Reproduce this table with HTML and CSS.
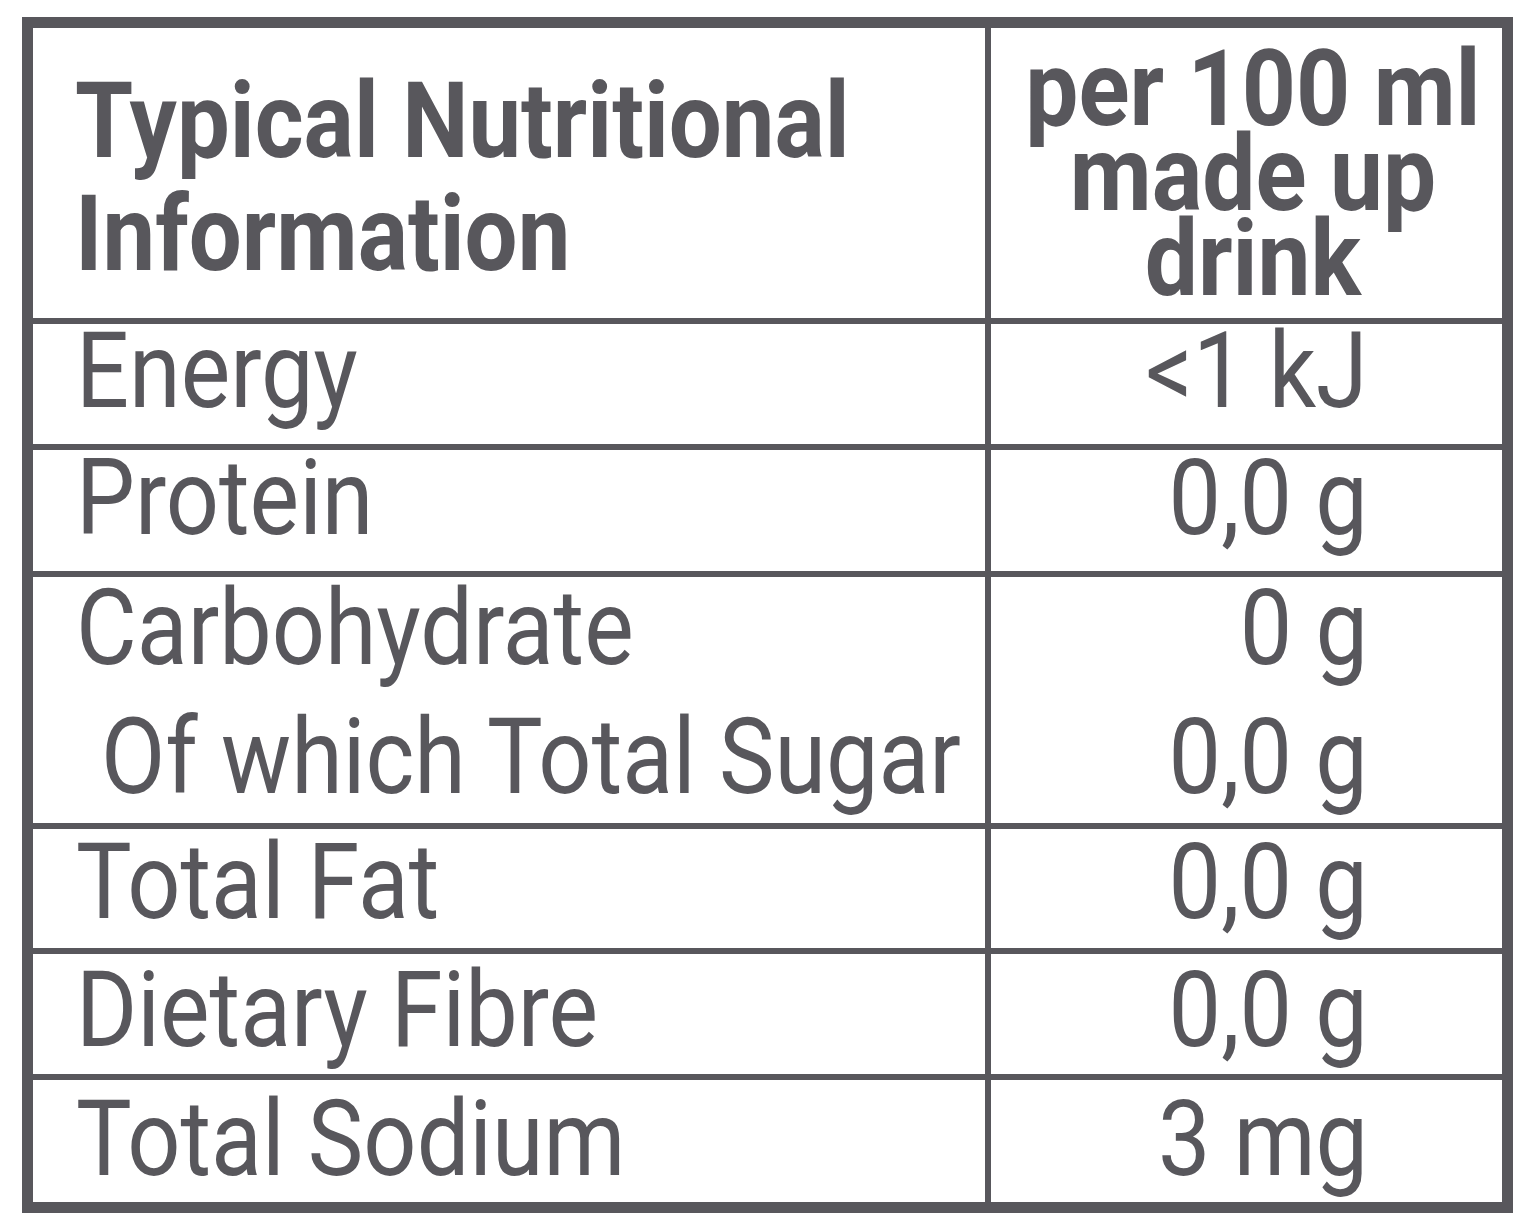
FILE: index.html
```html
<!DOCTYPE html>
<html lang="en">
<head>
<meta charset="utf-8">
<title>Typical Nutritional Information</title>
<link rel="stylesheet" href="styles.css">
</head>
<body>
<div class="panel">
  <div class="table">
    <div class="cell head-label"><span class="sq sq-left">Typical Nutritional<br>Information</span></div>
    <div class="cell head-value"><span class="sq sq-center">per 100 ml<br>made up<br>drink</span></div>

    <div class="cell label r-energy"><span class="sq sq-left">Energy</span></div>
    <div class="cell value r-energy"><span class="sq sq-right">&lt;1 kJ</span></div>

    <div class="cell label r-protein"><span class="sq sq-left">Protein</span></div>
    <div class="cell value r-protein"><span class="sq sq-right">0,0 g</span></div>

    <div class="cell label r-carb">
      <span class="sq sq-left">Carbohydrate</span>
      <span class="sq sq-left sub">Of which Total Sugar</span>
    </div>
    <div class="cell value r-carb">
      <span class="sq sq-right">0 g</span>
      <span class="sq sq-right">0,0 g</span>
    </div>

    <div class="cell label r-fat"><span class="sq sq-left">Total Fat</span></div>
    <div class="cell value r-fat"><span class="sq sq-right">0,0 g</span></div>

    <div class="cell label r-fibre"><span class="sq sq-left">Dietary Fibre</span></div>
    <div class="cell value r-fibre"><span class="sq sq-right">0,0 g</span></div>

    <div class="cell label r-sodium"><span class="sq sq-left">Total Sodium</span></div>
    <div class="cell value r-sodium"><span class="sq sq-right">3 mg</span></div>
  </div>
</div>
</body>
</html>
```
FILE: styles.css
```css
html, body {
  margin: 0;
  padding: 0;
  background: #ffffff;
}

body {
  font-family: Roboto, "Liberation Sans", sans-serif;
  color: #58575c;
}

.panel {
  margin: 17px 0 0 22px;
  width: 1469px;
  border: 11px solid #58575c;
  background: #58575c;
}

.table {
  display: grid;
  grid-template-columns: 952px 511px;
  grid-template-rows: 290px 120px 121px 246px 119px 120px 122px;
  gap: 6px;
}

.cell {
  background: #ffffff;
  font-size: 105px;
  line-height: 94px;
}

.sq {
  display: inline-block;
  transform: scaleX(0.89);
  white-space: nowrap;
}

.sq-left { transform-origin: left center; }
.sq-right { transform-origin: right center; }
.sq-center { transform-origin: center center; }

.head-label {
  font-weight: 700;
  line-height: 113px;
  display: flex;
  align-items: center;
  padding: 10px 0 0 42px;
}

.head-label .sq {
  transform: scaleX(0.895);
}

.head-value {
  font-weight: 700;
  line-height: 85px;
  display: flex;
  align-items: center;
  justify-content: center;
  text-align: center;
  padding: 2px 0 0 12px;
}

.head-value .sq {
  transform: scaleX(0.9);
}

.label {
  display: flex;
  flex-direction: column;
  align-items: flex-start;
  padding-left: 43px;
}

.value {
  display: flex;
  flex-direction: column;
  align-items: flex-end;
  padding-right: 134px;
}

.r-energy { padding-top: 1px; }
.r-protein { padding-top: 2px; }
.r-carb { padding-top: 5px; }
.r-fat { padding-top: 7px; }
.r-fibre { padding-top: 10px; }
.r-sodium { padding-top: 13px; }

.r-carb .sq + .sq {
  margin-top: 35px;
}

.sub {
  margin-left: 25px;
}
```
